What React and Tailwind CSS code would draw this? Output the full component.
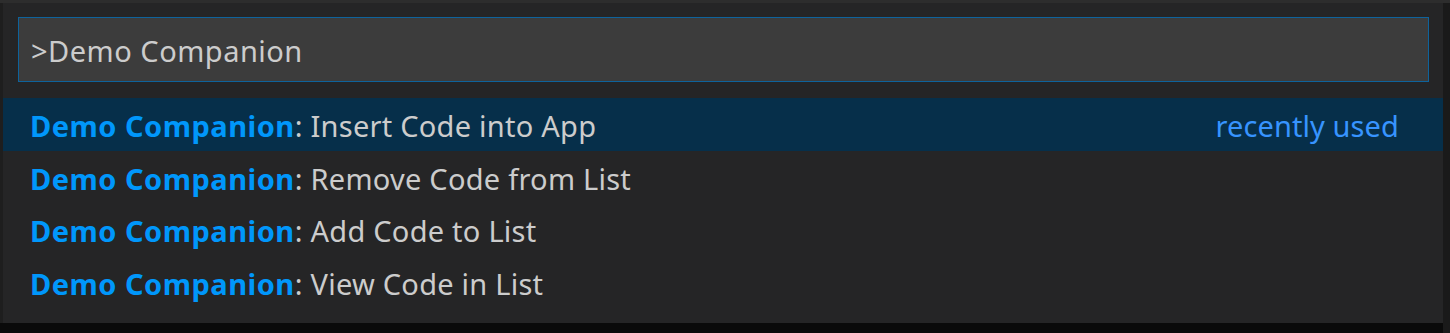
export default function App() {
  const rows = [
    { cmd: "Insert Code into App", recent: true },
    { cmd: "Remove Code from List" },
    { cmd: "Add Code to List" },
    { cmd: "View Code in List" },
  ];
  return (
    <div className="w-[1450px] h-[333px] bg-[#0a0a0a] flex flex-col overflow-hidden" style={{ fontFamily: '"Noto Sans", "Open Sans", sans-serif' }}>
      <div className="h-[3px] bg-[#2d2d2d] shrink-0" />
      <div className="flex flex-1 min-h-0">
        <div className="w-[3px] h-[320px] bg-[#1e1e1e]" />
        <div className="w-[1440px] h-[320px] bg-[#252526] flex flex-col">
          <div className="pt-[14px] pl-[15px] pr-[14px]">
            <div className="h-[65px] border border-[#0e639c] bg-[#3c3c3c] flex items-center pl-[12px] pt-[3px] text-[29px] tracking-[0.5px] text-[#cccccc]">
              &gt;Demo Companion
            </div>
          </div>
          <div className="mt-[16px] flex flex-col">
            {rows.map((r, i) => (
              <div key={i} className={`h-[52.5px] flex items-center pl-[27px] pr-[44px] pt-[3px] text-[29px] ${r.recent ? "bg-[#062f4a]" : ""}`}>
                <span className="font-bold text-[#0097fb] tracking-[0.5px]">Demo Companion</span>
                <span className="text-[#cccccc] tracking-[0.25px]">: {r.cmd}</span>
                {r.recent && <span className="ml-auto text-[#3794ff] tracking-[0.1px]">recently used</span>}
              </div>
            ))}
          </div>
        </div>
        <div className="flex-1 bg-[#1a1a1a]" />
      </div>
    </div>
  );
}
